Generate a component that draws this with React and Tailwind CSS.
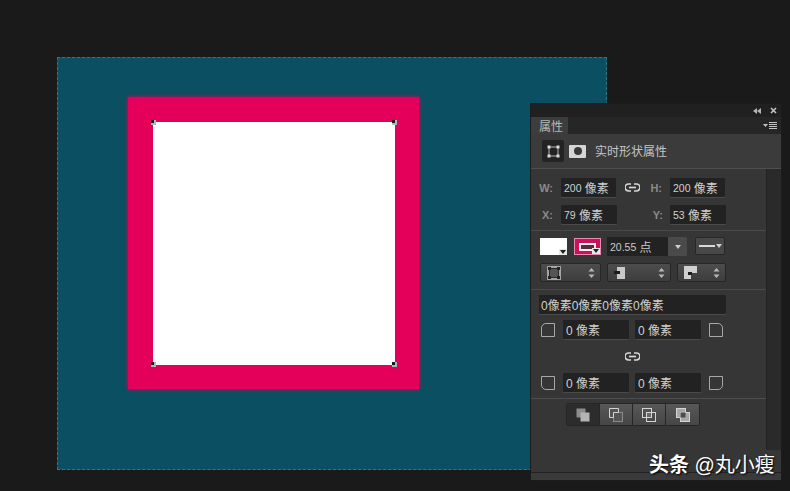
const cjk = { fontFamily: '"Liberation Sans", "Noto Sans CJK SC", sans-serif' }

function Field({ w, children, className = '' }) {
  return (
    <div className={`flex h-[19px] items-center whitespace-pre rounded-[1px] bg-[#222222] pl-[3px] pt-[2px] text-[12px] leading-none text-[#d0d0d0] shadow-[0_1px_0_#4a4a4a] ${w} ${className}`}>
      {children}
    </div>
  )
}

function Num({ children }) {
  return <span className="text-[10.5px]">{children}</span>
}

function Label({ w, children }) {
  return <span className={`pt-[1px] text-right text-[11px] font-bold leading-none text-[#8a8a8a] ${w}`}>{children}</span>
}

function LinkIcon() {
  return (
    <svg width="15" height="9" viewBox="0 0 15 9" fill="none" stroke="#d8d8d8" strokeWidth="1.7">
      <path d="M6 1H3.5a3.5 3.5 0 0 0 0 7H6" />
      <path d="M9 1h2.5a3.5 3.5 0 0 1 0 7H9" />
      <path d="M4 4.5h7" />
    </svg>
  )
}

function Updown() {
  return (
    <svg width="7" height="12" viewBox="0 0 7 12" fill="#b8b8b8">
      <path d="M3.5 1 6.5 4.5H.5z" />
      <path d="M3.5 11 .5 7.5h6z" />
    </svg>
  )
}

function Caret({ className = '' }) {
  return (
    <svg width="6" height="4" viewBox="0 0 6 4" fill="#d0d0d0" className={className}>
      <path d="M0 0h6L3 4z" />
    </svg>
  )
}

function Dropdown({ w, children }) {
  return (
    <div className={`flex h-[19px] items-center justify-between rounded-[2px] border border-[#262626] bg-gradient-to-b from-[#4d4d4d] to-[#3d3d3d] pl-[6px] pr-[5px] ${w}`}>
      {children}
      <Updown />
    </div>
  )
}

function Corner({ rounded }) {
  return <div className={`h-[14px] w-[14px] border border-[#a8a8a8] ${rounded}`} />
}

function PathOp({ active, kind }) {
  return (
    <div className={`flex h-[21px] w-[33px] items-center justify-center border-r border-[#262626] last:border-r-0 ${active ? 'bg-[#2c2c2c]' : 'bg-gradient-to-b from-[#585858] to-[#464646]'}`}>
      <svg width="14" height="14" viewBox="0 0 14 14">
        {kind === 0 && (
          <>
            <rect x="0.5" y="0.5" width="9" height="9" fill="#8c8c8c" />
            <rect x="4.5" y="4.5" width="9" height="9" fill="#b4b4b4" />
          </>
        )}
        {kind === 1 && (
          <>
            <rect x="4.5" y="4.5" width="9" height="9" fill="#555555" stroke="#8a8a8a" />
            <path d="M0.5 9.5v-9h9v4h-5v5z" fill="#555555" stroke="#d4d4d4" />
          </>
        )}
        {kind === 2 && (
          <>
            <rect x="0.5" y="0.5" width="9" height="9" fill="none" stroke="#d4d4d4" />
            <rect x="4.5" y="4.5" width="9" height="9" fill="none" stroke="#d4d4d4" />
            <rect x="5" y="5" width="4" height="4" fill="#6a6a6a" />
          </>
        )}
        {kind === 3 && (
          <>
            <rect x="0.5" y="0.5" width="9" height="9" fill="#a8a8a8" stroke="#d4d4d4" />
            <rect x="4.5" y="4.5" width="9" height="9" fill="#a8a8a8" stroke="#d4d4d4" />
            <rect x="4.5" y="4.5" width="5" height="5" fill="#4c4c4c" />
          </>
        )}
      </svg>
    </div>
  )
}

function Handle({ className }) {
  return (
    <span className={`absolute h-[5px] w-[5px] bg-[#a6bdb6] ${className}`}>
      <span className="block h-[3px] w-[3px] bg-[#1c1c1c]" />
    </span>
  )
}

function Panel() {
  return (
    <div className="absolute left-[531px] top-[104px] flex h-[376px] w-[250px] flex-col bg-[#363636] shadow-[0_0_0_1px_#1c1c1c]">
      <div className="flex h-[13px] items-center justify-end gap-[9px] bg-[#202020] pr-[4px]">
        <svg width="8" height="6" viewBox="0 0 8 6" fill="#b4b4b4">
          <path d="M4 0v6L0 3zM8 0v6L4 3z" />
        </svg>
        <svg width="7" height="7" viewBox="0 0 7 7" stroke="#c4c4c4" strokeWidth="1.6">
          <path d="M1 1l5 5M6 1L1 6" />
        </svg>
      </div>

      <div className="flex h-[17px] items-stretch justify-between bg-[#262626]">
        <div className="flex w-[37px] items-center bg-[#3d3d3d] pl-[8px] pt-[2px] text-[12px] leading-none text-[#b8b8b8]">属性</div>
        <div className="flex items-center gap-[1px] pr-[4px]">
          <svg width="5" height="3" viewBox="0 0 5 3" fill="#c4c4c4">
            <path d="M0 0h5L2.500 3z" />
          </svg>
          <div className="h-[7px] w-[8px] bg-[repeating-linear-gradient(to_bottom,#c4c4c4_0,#c4c4c4_1px,transparent_1px,transparent_2px)]" />
        </div>
      </div>

      <div className="flex h-[35px] items-center gap-[5px] border-b border-[#4e4e4e] bg-[#3b3b3b] pl-[11px]">
        <div className="flex h-[22px] w-[22px] items-center justify-center rounded-[2px] bg-[#232323]">
          <svg width="13" height="13" viewBox="0 0 13 13" fill="#dcdcdc">
            <rect x="2" y="2" width="9" height="9" fill="none" stroke="#b8b8b8" />
            <rect x="0.500" y="0.500" width="3" height="3" />
            <rect x="9.500" y="0.500" width="3" height="3" />
            <rect x="0.500" y="9.500" width="3" height="3" />
            <rect x="9.500" y="9.500" width="3" height="3" />
          </svg>
        </div>
        <div className="flex h-[13px] w-[17px] items-center justify-center rounded-[1px] bg-[#d6d6d6]">
          <div className="h-[8px] w-[8px] rounded-full bg-[#3a3a3a]" />
        </div>
        <span className="ml-[4px] pt-[2px] text-[12px] leading-none text-[#c4c4c4]">实时形状属性</span>
      </div>

      <div className="flex min-h-0 flex-1">
        <div className="flex w-[235px] flex-col">
          <div className="flex h-[62px] flex-col gap-[8px] border-b border-[#4a4a4a] pt-[9px]">
            <div className="flex items-center">
              <Label w="w-[22px]">W:</Label>
              <Field w="w-[55px]" className="ml-[8px]"><Num>200</Num> 像素</Field>
              <span className="ml-[9px] flex"><LinkIcon /></span>
              <Label w="w-[22px]">H:</Label>
              <Field w="w-[55px]" className="ml-[8px]"><Num>200</Num> 像素</Field>
            </div>
            <div className="flex items-center">
              <Label w="w-[22px]">X:</Label>
              <Field w="w-[56px]" className="ml-[8px]"><Num>79</Num> 像素</Field>
              <span className="w-[24px]" />
              <Label w="w-[22px]">Y:</Label>
              <Field w="w-[56px]" className="ml-[7px]"><Num>53</Num> 像素</Field>
            </div>
          </div>

          <div className="flex h-[59px] flex-col gap-[7px] border-b border-[#4a4a4a] pl-[9px] pt-[6px]">
            <div className="flex items-start">
              <div className="relative mt-[1px] h-[17px] w-[27px] bg-white">
                <span className="absolute bottom-0 right-0 flex h-[6px] w-[8px] items-center justify-center bg-[#e8e8e8]">
                  <Caret className="[&_path]:fill-[#222222]" />
                </span>
              </div>
              <div className="relative ml-[7px] mt-[1px] flex h-[17px] w-[27px] items-center border border-[#e88ab0] bg-[#c8125c] pl-[4px]">
                <div className="h-[8px] w-[17px] border-2 border-[#eeeeee] bg-[#5a2a40]" />
                <span className="absolute bottom-0 right-0 flex h-[6px] w-[8px] items-center justify-center bg-[#e8e8e8]">
                  <Caret className="[&_path]:fill-[#222222]" />
                </span>
              </div>
              <div className="ml-[6px] flex h-[19px] w-[80px] items-stretch rounded-[1px] bg-[#222222]">
                <span className="flex flex-1 items-center whitespace-pre pl-[3px] pt-[2px] text-[12px] leading-none text-[#c8c8c8]"><Num>20.55</Num> 点</span>
                <span className="flex w-[19px] items-center justify-center rounded-r-[1px] bg-[#4a4a4a]"><Caret /></span>
              </div>
              <div className="ml-[8px] flex h-[18px] w-[30px] items-center justify-between rounded-[2px] border border-[#262626] bg-[#484848] pl-[3px] pr-[2px]">
                <span className="h-[2px] w-[16px] bg-[#d8d8d8]" />
                <Caret />
              </div>
            </div>
            <div className="flex items-center gap-[6px]">
              <Dropdown w="w-[61px]">
                <svg width="14" height="14" viewBox="0 0 14 14">
                  <rect x="0" y="0" width="14" height="14" fill="#a4a4a4" />
                  <rect x="2.500" y="2.500" width="9" height="9" fill="#555555" stroke="#2a2a2a" />
                  <rect x="1" y="1" width="3" height="3" fill="#222222" />
                  <rect x="10" y="1" width="3" height="3" fill="#222222" />
                  <rect x="1" y="10" width="3" height="3" fill="#222222" />
                  <rect x="10" y="10" width="3" height="3" fill="#222222" />
                </svg>
              </Dropdown>
              <Dropdown w="w-[64px]">
                <svg width="11" height="12" viewBox="0 0 11 12">
                  <path d="M3 0h8v12H3z" fill="#c8c8c8" />
                  <rect x="0" y="4" width="6" height="3" fill="#1c1c1c" />
                </svg>
              </Dropdown>
              <Dropdown w="w-[49px]">
                <svg width="13" height="13" viewBox="0 0 13 13">
                  <path d="M0 0h13v7H7v6H0z" fill="#d0d0d0" />
                  <rect x="4" y="6" width="4" height="3" fill="#1c1c1c" />
                </svg>
              </Dropdown>
            </div>
          </div>

          <div className="flex h-[109px] flex-col border-b border-[#4e4e4e] pl-[9px] pt-[5px]">
            <Field w="w-[187px]" className="-ml-[1px] !pl-[2px]">0像素0像素0像素0像素</Field>
            <div className="mt-[6px] flex items-center">
              <span className="ml-[1px]"><Corner rounded="rounded-tl-[5px]" /></span>
              <Field w="w-[66px]" className="ml-[8px]">0 像素</Field>
              <Field w="w-[66px]" className="ml-[6px]">0 像素</Field>
              <span className="ml-[8px]"><Corner rounded="rounded-tr-[5px]" /></span>
            </div>
            <div className="mt-[11px] flex h-[12px] items-center pl-[85px]"><LinkIcon /></div>
            <div className="mt-[11px] flex items-center">
              <span className="ml-[1px]"><Corner rounded="rounded-bl-[5px]" /></span>
              <Field w="w-[66px]" className="ml-[8px]">0 像素</Field>
              <Field w="w-[66px]" className="ml-[6px]">0 像素</Field>
              <span className="ml-[8px]"><Corner rounded="rounded-br-[5px]" /></span>
            </div>
          </div>

          <div className="flex pl-[35px] pt-[4px]">
            <div className="flex overflow-hidden rounded-[2px] border border-[#262626]">
              <PathOp active kind={0} />
              <PathOp kind={1} />
              <PathOp kind={2} />
              <PathOp kind={3} />
            </div>
          </div>
        </div>
        <div className="flex-1">
          <div className="h-[281px] border-l border-[#232323] bg-[#2a2a2a]" />
        </div>
      </div>

      <div className="h-[8px] border-t border-[#222222] bg-[#3a3a3a]" />

      <span className="absolute left-[118px] top-[351px] whitespace-nowrap text-[20px] leading-none text-white [text-shadow:1px_1px_2px_#000000]">
        <span className="font-bold">头条</span> @丸小瘦
      </span>
    </div>
  )
}

export default function App() {
  return (
    <div style={cjk} className="relative h-[491px] w-[790px] overflow-hidden bg-[#1a1a1a]">
      <div className="pl-[57px] pt-[57px]">
        <div className="flex h-[413px] w-[550px] flex-col border border-dashed border-[#3d747c] bg-[#0b4f62] pl-[70px] pt-[39px]">
          <div className="h-[292px] w-[291px] bg-[#e4005a] pb-[24px] pl-[25px] pr-[24px] pt-[25px] shadow-[0_0_4px_#e4005a]">
            <div className="relative h-[243px] w-[242px] bg-white">
              <Handle className="-left-[2px] -top-[2px]" />
              <Handle className="-right-[2px] -top-[2px]" />
              <Handle className="-bottom-[2px] -left-[2px]" />
              <Handle className="-bottom-[2px] -right-[2px]" />
            </div>
          </div>
        </div>
      </div>
      <Panel />
    </div>
  )
}
